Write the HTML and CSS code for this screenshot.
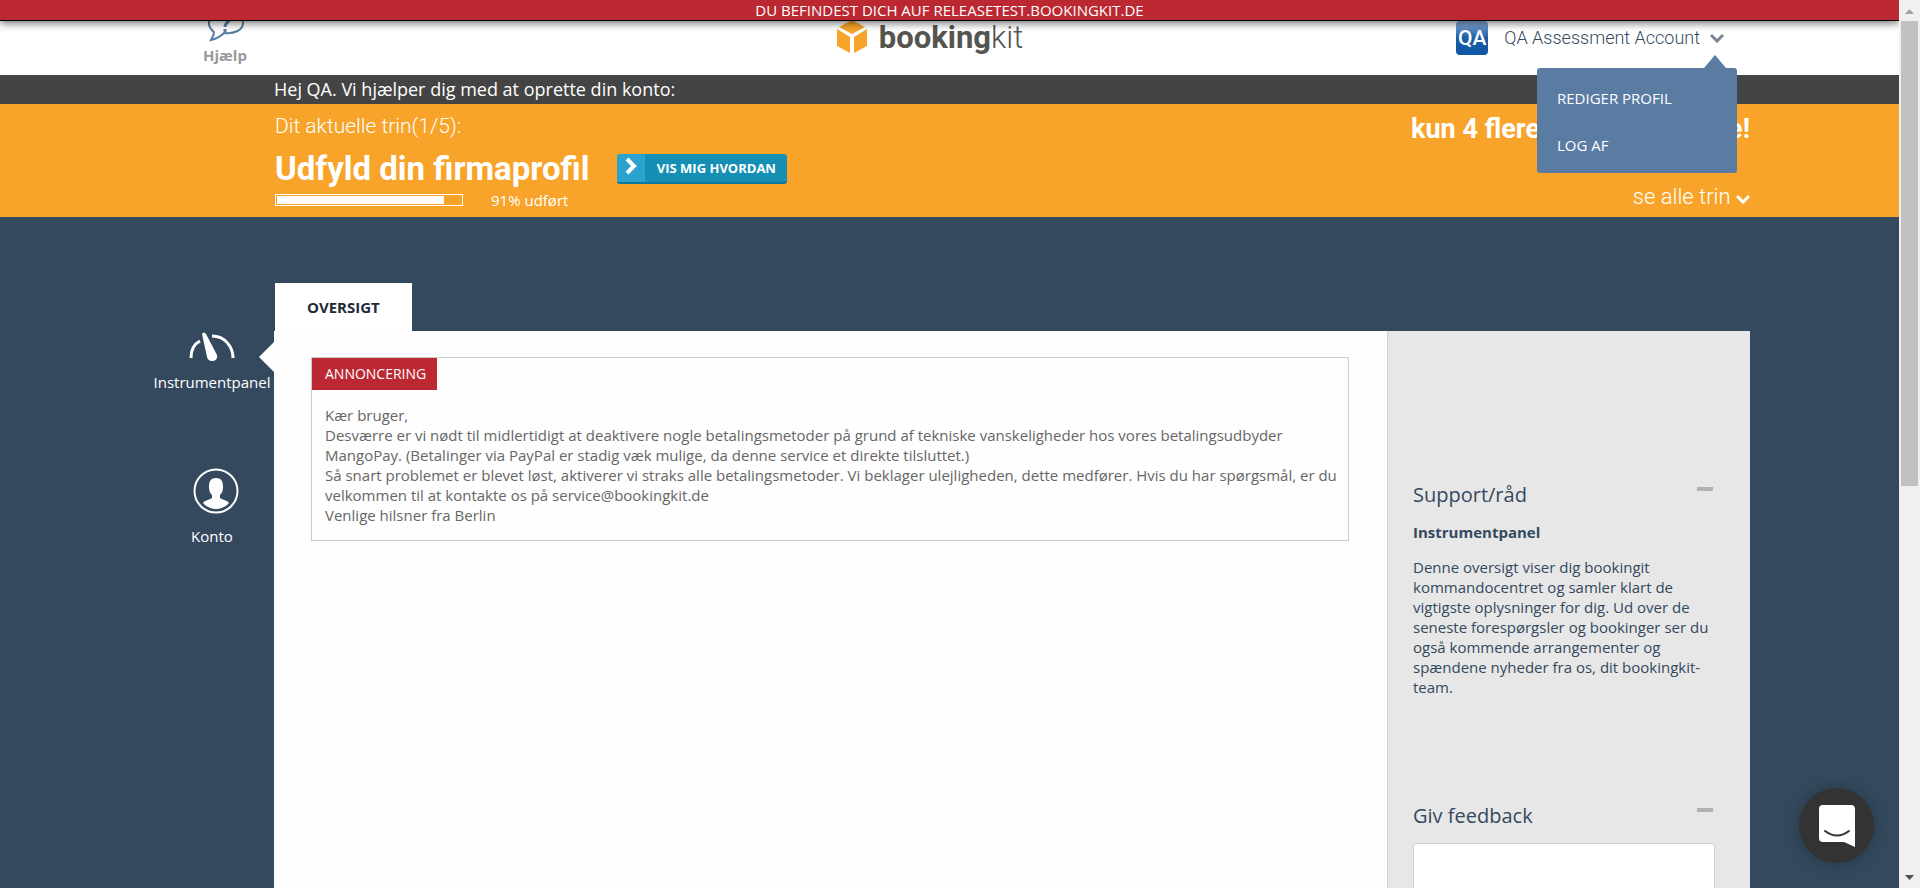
FILE: index.html
```html
<!DOCTYPE html>
<html lang="da">
<head>
<meta charset="utf-8">
<title>bookingkit</title>
<link rel="stylesheet" href="styles.css">
</head>
<body>
<div class="page">
  <p class="env-banner">DU BEFINDEST DICH AUF RELEASETEST.BOOKINGKIT.DE</p>
  <header class="header">
    <a class="help" href="#">
      <svg class="help-icon" viewBox="0 0 38 32" aria-hidden="true"><path d="M8 22C-2 14 4 1 19 1c12 0 18 6 18 12 0 7-8 11-19 10-4 4-8 6-13 7 2-3 3-5 3-8z" fill="none" stroke="#5a7ca3" stroke-width="2"/><path d="M15 9c1-4 9-4 9 0 0 3-5 3-5 8m0 2v3" fill="none" stroke="#5a7ca3" stroke-width="3"/></svg>
      <span>Hjælp</span>
    </a>
    <a class="logo" href="#" aria-label="bookingkit">
      <svg class="logo-icon" viewBox="0 0 30 34" aria-hidden="true"><path d="M15 0l13 7-13 7L2 7zM0 9l13 8v16L0 26zM30 9l-13 8v16l13-7z" fill="#f8a42a"/></svg>
      <span class="logo-text"><b>booking</b>kit</span>
    </a>
    <div class="account">
      <button class="account-toggle" type="button">
        <span class="avatar">QA</span>
        <span>QA Assessment Account</span>
        <svg class="chev" viewBox="0 0 14 10" aria-hidden="true"><path d="M1 2l6 6 6-6" fill="none" stroke="#7a8494" stroke-width="3"/></svg>
      </button>
      <nav class="menu">
        <a href="#">REDIGER PROFIL</a>
        <a href="#">LOG AF</a>
      </nav>
    </div>
  </header>
  <div class="greeting">Hej QA. Vi hjælper dig med at oprette din konto:</div>
  <section class="steps">
    <div class="steps-main">
      <p class="step-now">Dit aktuelle trin(1/5):</p>
      <div class="step-row">
        <h1>Udfyld din firmaprofil</h1>
        <button class="how" type="button">
          <svg viewBox="0 0 28 28" aria-hidden="true"><path d="M10 5l7 7-7 7" fill="none" stroke="#fff" stroke-width="4"/></svg>
          <span>VIS MIG HVORDAN</span>
        </button>
      </div>
      <div class="progress-row">
        <div class="bar"><div class="fill" style="width:91%"></div></div>
        <span>91% udført</span>
      </div>
    </div>
    <div class="steps-side">
      <p class="remaining">kun 4 flere trin og du er live!</p>
      <a class="all-steps" href="#">se alle trin <svg class="chev" viewBox="0 0 14 10" aria-hidden="true"><path d="M1 2l6 6 6-6" fill="none" stroke="#fff" stroke-width="3"/></svg></a>
    </div>
  </section>
  <div class="body">
    <nav class="side">
      <a class="side-item active" href="#">
        <svg class="gauge" viewBox="0 0 46 30" aria-hidden="true"><path d="M2 26c0-8 3-14 9-17M23 4c13 0 21 11 21 22" fill="none" stroke="#fff" stroke-width="3"/><path d="M13 2q2-3 4 0l11 21q1 6-5 6-4 0-5-4z" fill="#fff"/></svg>
        <span>Instrumentpanel</span>
      </a>
      <a class="side-item" href="#">
        <svg class="person" viewBox="0 0 46 46" aria-hidden="true"><circle cx="23" cy="23" r="21.5" fill="none" stroke="#fff" stroke-width="2"/><path d="M23 10c6 0 7 4 7 9 0 4-1 6-3 8v3c3 2 7 2 9 5-7 8-19 8-26 0 2-3 6-3 9-5v-3c-2-2-3-4-3-8 0-5 1-9 7-9z" fill="#fff"/></svg>
        <span>Konto</span>
      </a>
    </nav>
    <div class="work">
      <a class="tab" href="#">OVERSIGT</a>
      <div class="panel">
        <main class="main">
          <article class="notice">
            <h2>ANNONCERING</h2>
            <p>Kær bruger,<br>Desværre er vi nødt til midlertidigt at deaktivere nogle betalingsmetoder på grund af tekniske vanskeligheder hos vores betalingsudbyder MangoPay. (Betalinger via PayPal er stadig væk mulige, da denne service et direkte tilsluttet.)<br>Så snart problemet er blevet løst, aktiverer vi straks alle betalingsmetoder. Vi beklager ulejligheden, dette medfører. Hvis du har spørgsmål, er du velkommen til at kontakte os på service@bookingkit.de<br>Venlige hilsner fra Berlin</p>
          </article>
        </main>
        <aside class="aside">
          <section class="support">
            <div class="aside-head"><h2>Support/råd</h2><button class="fold" type="button" aria-label="Fold sammen"></button></div>
            <h3>Instrumentpanel</h3>
            <p>Denne oversigt viser dig bookingit kommandocentret og samler klart de vigtigste oplysninger for dig. Ud over de seneste forespørgsler og bookinger ser du også kommende arrangementer og spændene nyheder fra os, dit bookingkit-team.</p>
          </section>
          <section>
            <div class="aside-head"><h2><label for="feedback">Giv feedback</label></h2><button class="fold" type="button" aria-label="Fold sammen"></button></div>
            <textarea id="feedback"></textarea>
          </section>
        </aside>
      </div>
    </div>
  </div>
</div>
<div class="scrollbar" aria-hidden="true">
  <svg viewBox="0 0 21 21"><path d="M6 14l4.500-5 4.500 5z" fill="#a3a3a3"/></svg>
  <div class="thumb"></div>
  <svg viewBox="0 0 21 21"><path d="M6 8l4.500 5 4.500-5z" fill="#505050"/></svg>
</div>
<button class="chat" type="button" aria-label="Chat">
  <svg viewBox="0 0 36 42" aria-hidden="true"><path d="M4 0h28q4 0 4 4v38l-11-5H4q-4 0-4-4V4q0-4 4-4z" fill="#fff"/><path d="M6 26q12 9 24 0" fill="none" stroke="#333" stroke-width="2" stroke-linecap="round"/></svg>
</button>
</body>
</html>
```
FILE: styles.css
```css
* { box-sizing: border-box; }
body { margin: 0; display: flex; height: 100vh; overflow: hidden; font: 15px/20px "Open Sans", sans-serif; color: #34495e; }
h1, h2, h3, p { margin: 0; }
a { color: inherit; text-decoration: none; }
button { border: 0; padding: 0; background: none; font: inherit; color: inherit; cursor: pointer; }
svg { display: block; flex: none; }

.page { flex: 1; min-width: 0; background: #34495e; display: flex; flex-direction: column; overflow: hidden; position: relative; }
.env-banner { position: absolute; z-index: 5; top: 0; left: 0; right: 0; background: #bc2832; color: #fff; text-align: center; border-bottom: 1px solid #000; box-shadow: 0 2px 8px rgba(0,0,0,.6); }

.header { flex: none; background: #fff; height: 75px; display: grid; grid-template-columns: 1fr auto 1fr; padding: 10px 149px 0 110px; }
.help { justify-self: start; margin-left: 93px; display: flex; flex-direction: column; align-items: center; gap: 3px; font-size: 15px; font-weight: 700; color: #999; }
.help-icon { width: 38px; height: 32px; }
.logo { display: flex; align-items: flex-start; gap: 12px; padding-top: 10px; color: #555550; }
.logo-icon { width: 30px; height: 34px; }
.logo-text { font: 300 31px/36px Roboto, sans-serif; }
.logo-text b { font-weight: 700; }
.account { justify-self: end; position: relative; padding: 11px 26px 0 0; }
.account-toggle { display: flex; align-items: center; gap: 16px; font: 300 18px/34px Roboto, sans-serif; }
.account-toggle .chev { margin-left: -6px; }
.avatar { width: 32px; height: 34px; border-radius: 4px; background: linear-gradient(#8fb2da, #1c5ba5 50%, #0d57a5); color: #fff; font: 500 21px/34px Roboto, sans-serif; text-align: center; }
.chev { width: 14px; height: 10px; display: inline-block; }
.menu { position: absolute; z-index: 4; top: 58px; right: 13px; width: 200px; padding: 14px 20px 12px; background: #5a7ca3; border-radius: 3px; color: #fff; display: flex; flex-direction: column; }
.menu::before { content: ""; position: absolute; right: 11px; top: -13px; border: solid transparent; border-width: 0 11px 13px; border-bottom-color: #5a7ca3; }
.menu a { line-height: 32px; padding-bottom: 15px; }
.menu a:last-child { padding-bottom: 0; }

.greeting { flex: none; background: #444; color: #fff; font-size: 18px; line-height: 29px; padding: 0 149px 0 274px; }
.steps { flex: none; height: 113px; background: #f8a42a; color: #fff; padding: 8px 149px 0 275px; display: flex; justify-content: space-between; }
.step-now { font: 300 21px/28px Roboto, sans-serif; margin-bottom: 8px; }
.step-row { display: flex; align-items: center; gap: 28px; height: 42px; }
h1 { font: 700 33px/42px Roboto, sans-serif; }
.how { display: flex; align-items: center; width: 170px; height: 30px; border-radius: 3px; overflow: hidden; background: #168fb5; border-bottom: 2px solid #0b789d; font-size: 13px; font-weight: 700; }
.how svg { width: 28px; height: 28px; background: #2ca3cf; }
.how span { flex: 1; text-align: center; }
.progress-row { display: flex; align-items: center; gap: 28px; }
.bar { width: 188px; height: 12px; border: 1px solid #fff; padding: 1px; }
.fill { height: 100%; background: #fff; }
.steps-side { text-align: right; display: flex; flex-direction: column; gap: 37px; }
.remaining { font: 700 27px/34px Roboto, sans-serif; }
.all-steps { font: 300 22px/28px Roboto, sans-serif; }

.body { flex: 1; min-height: 0; display: flex; padding-right: 149px; }
.side { flex: 0 0 274px; padding-top: 115px; display: flex; flex-direction: column; gap: 76px; color: #fff; }
.side-item { position: relative; display: flex; flex-direction: column; align-items: center; width: 118px; margin-left: 153px; }
.side-item.active::after { content: ""; position: absolute; right: -3px; top: 10px; border: solid transparent; border-width: 15px 15px 15px 0; border-right-color: #fff; }
.gauge { width: 46px; height: 30px; margin-bottom: 10px; }
.person { width: 46px; height: 46px; margin: 0 0 12px 8px; }
.work { flex: 1; min-width: 0; padding-top: 66px; display: flex; flex-direction: column; align-items: stretch; }
.tab { align-self: flex-start; margin-left: 1px; padding: 14px 32px; background: #fff; color: #1f2a38; font-weight: 700; }
.panel { flex: 1; min-height: 0; display: flex; background: #fefefe; }
.main { flex: 1; min-width: 0; padding: 26px 38px 26px 37px; }
.notice { border: 1px solid #ccc; padding-bottom: 15px; color: #666; }
.notice h2 { display: inline-block; background: #bc2832; color: #fff; font-size: 14px; font-weight: 400; line-height: 32px; padding: 0 11px 0 13px; }
.notice p { padding: 15px 10px 0 13px; }
.aside { flex: 0 0 363px; background: #e7e7e7; border-left: 1px solid #d0d0d0; padding: 149px 35px 0 25px; }
.support { margin-bottom: 104px; }
.aside-head { display: flex; justify-content: space-between; align-items: flex-start; height: 42px; }
.aside-head h2 { font-size: 20px; font-weight: 400; line-height: 30px; }
.fold { width: 16px; height: 4px; background: #b0b0b0; margin: 7px 2px 0 0; }
h3 { font-size: 15px; font-weight: 700; margin-bottom: 15px; }
textarea { display: block; width: 100%; height: 100px; border: 1px solid #d0d0d0; border-radius: 3px; background: #fff; resize: none; }

.scrollbar { flex: 0 0 21px; background: #f0f0f0; display: flex; flex-direction: column; }
.scrollbar svg { width: 21px; height: 21px; }
.scrollbar svg:last-child { margin-top: auto; }
.thumb { height: 465px; margin: 0 2px; background: #c1c1c1; }
.chat { position: absolute; z-index: 6; right: 46px; bottom: 25px; width: 75px; height: 75px; border-radius: 50%; background: #333; box-shadow: 0 1px 16px rgba(0,0,0,.25); display: grid; place-items: center; }
.chat svg { width: 36px; height: 42px; }
```
